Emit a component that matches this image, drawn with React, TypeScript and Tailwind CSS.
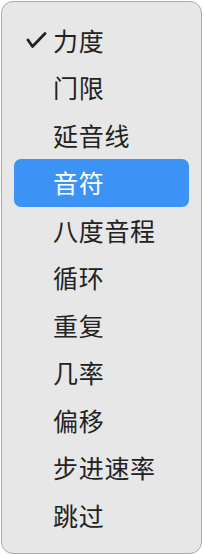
const items = ["力度", "门限", "延音线", "音符", "八度音程", "循环", "重复", "几率", "偏移", "步进速率", "跳过"];

export default function App() {
  const checked = 0;
  const active = 3;
  return (
    <div className="w-[205px] h-[556px] bg-white pl-[1px] pt-[1px]" style={{ fontFamily: '"Noto Sans CJK SC", "Noto Sans", sans-serif' }}>
      <div className="w-[201px] h-[553px] rounded-[12px] border border-[#a9a9a9] bg-[#e7e7e7] px-[12px] pt-[14.5px]">
        {items.map((label, i) => (
          <div
            key={label}
            className={`flex items-center h-[47.5px] rounded-[7px] pl-[12px] text-[25px] tracking-[0.7px] leading-none ${
              i === active ? "bg-[#3d93f5] text-white" : "text-[#222222]"
            }`}
          >
            <span className="w-[27px] flex items-center">
              {i === checked && (
                <svg width="21" height="17" viewBox="0 0 21 17" fill="none">
                  <path d="M2 8 L6.5 14.5 L19 1.5" stroke="#222222" strokeWidth="2.8" strokeLinecap="round" strokeLinejoin="round" />
                </svg>
              )}
            </span>
            <span>{label}</span>
          </div>
        ))}
      </div>
    </div>
  );
}
